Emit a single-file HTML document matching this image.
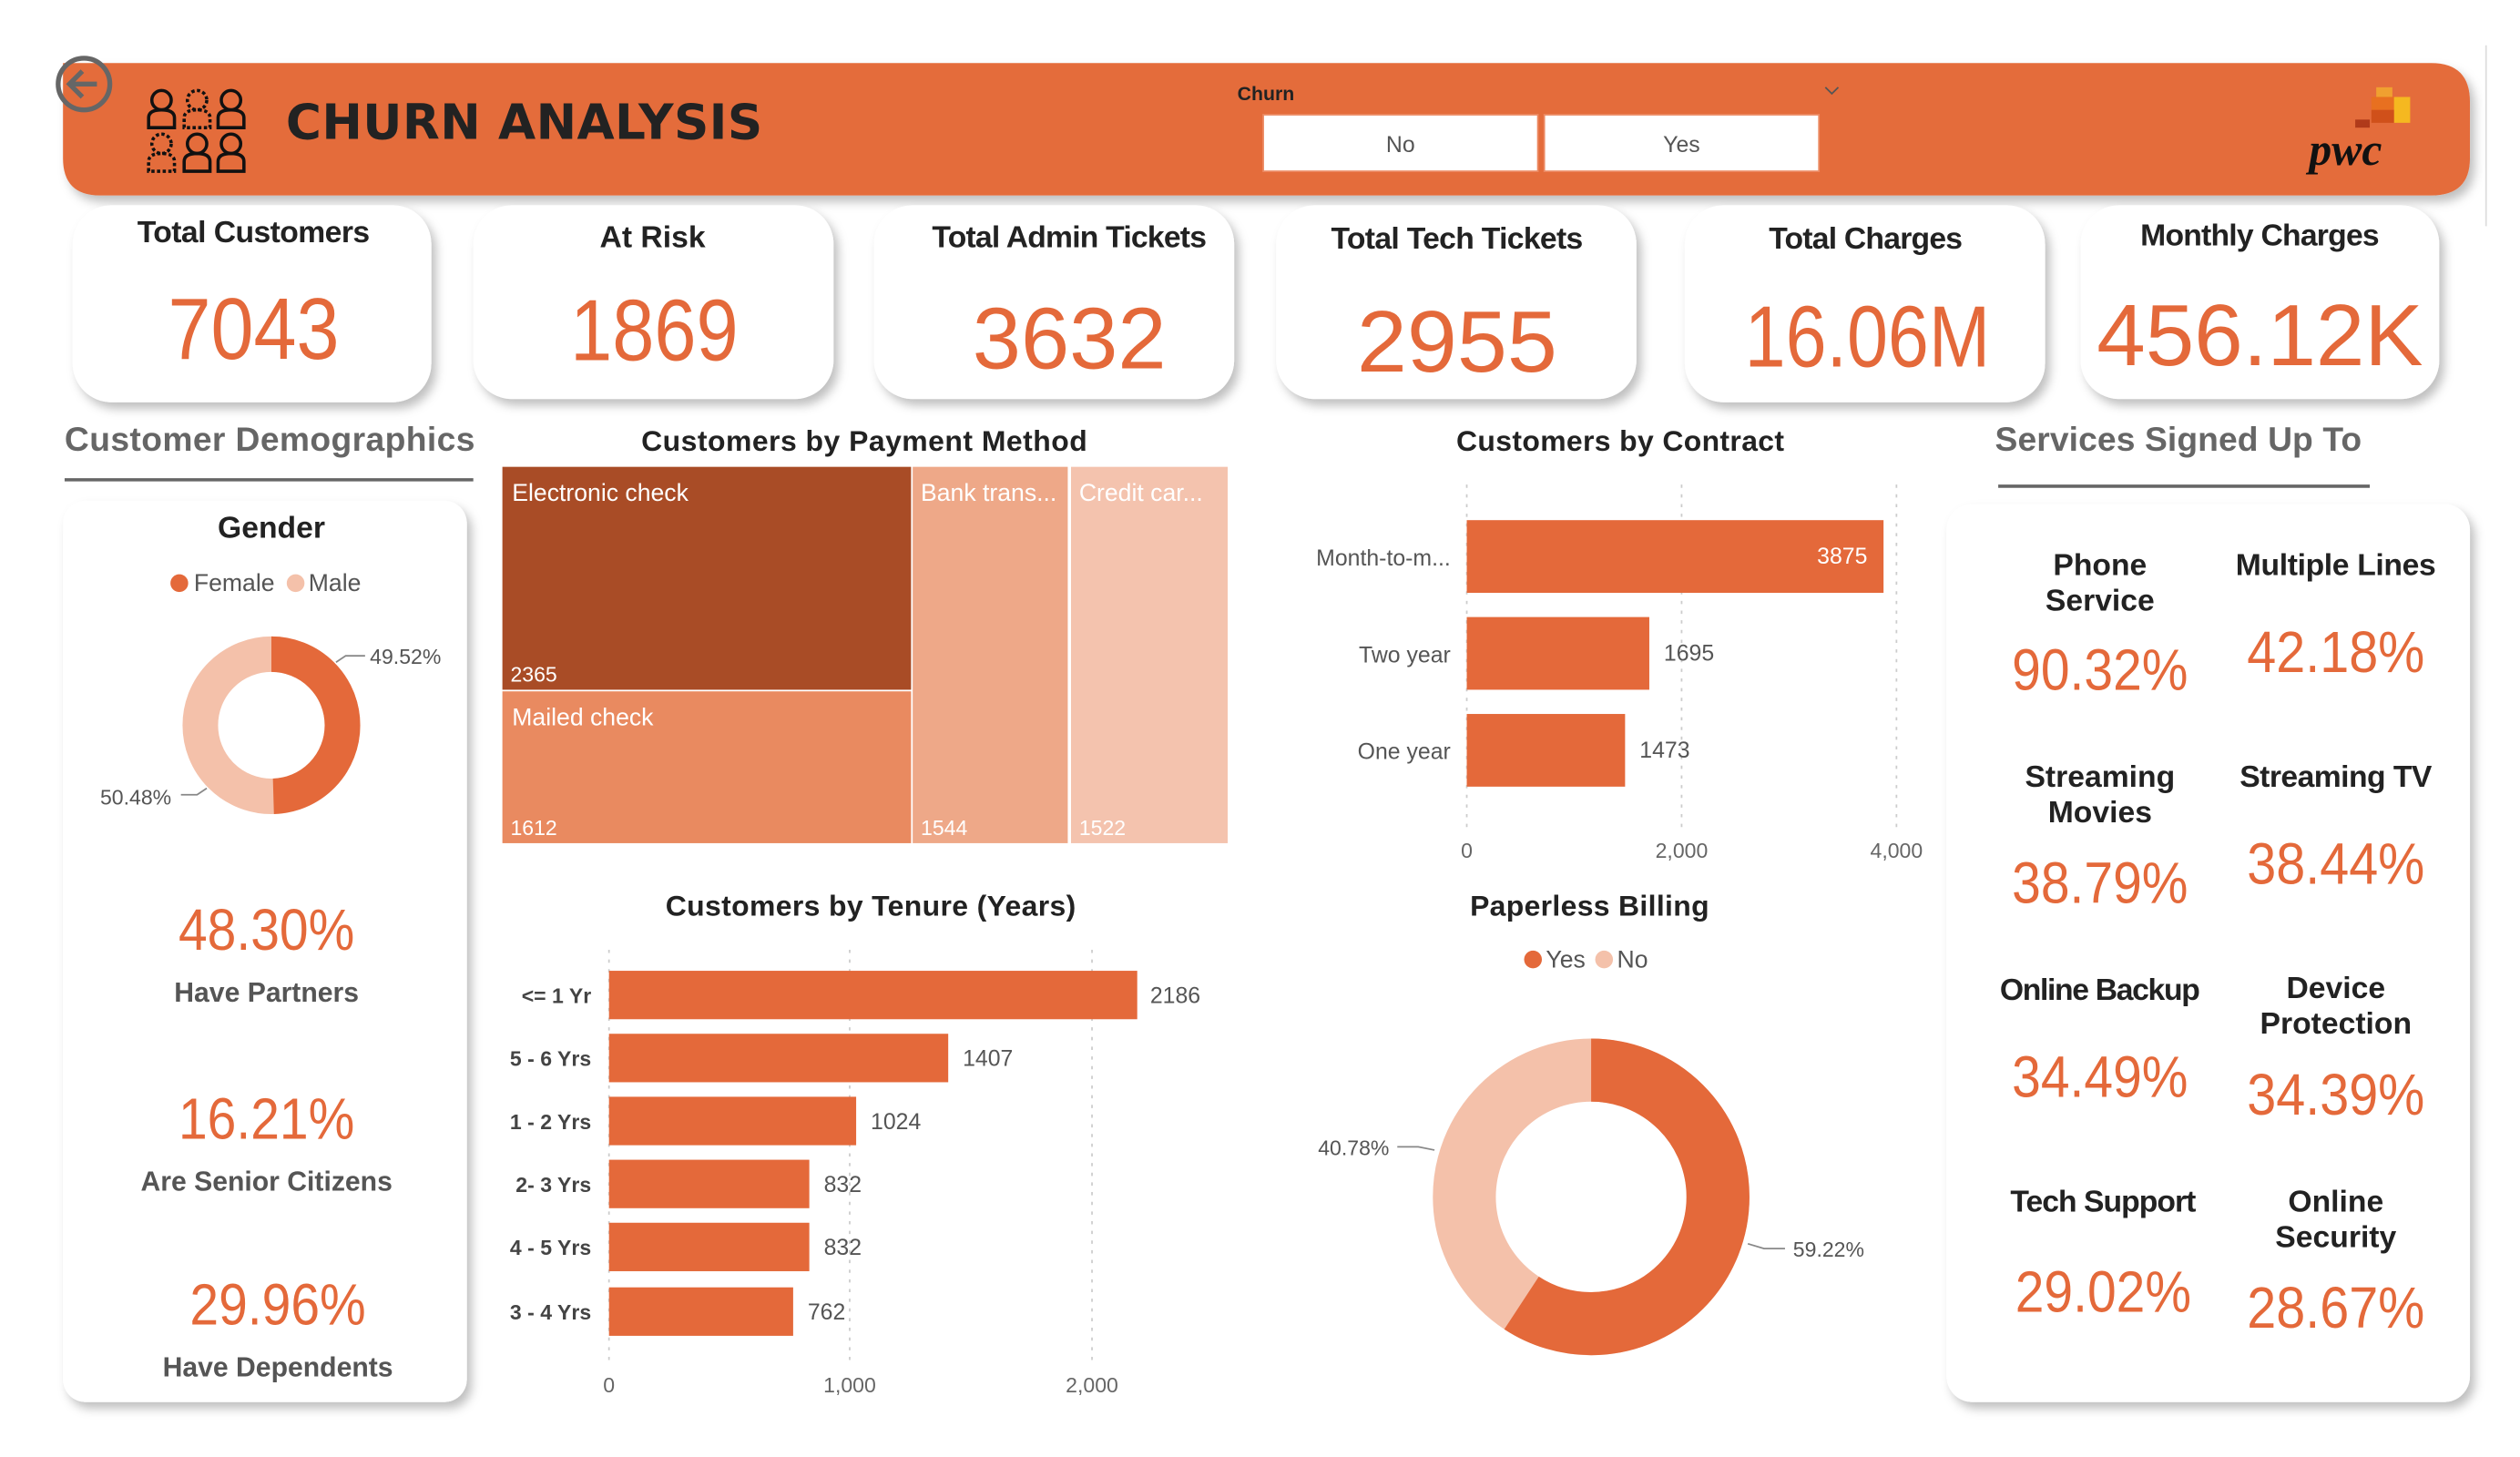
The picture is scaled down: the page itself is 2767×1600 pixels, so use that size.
<!DOCTYPE html>
<html><head><meta charset="utf-8">
<style>
html,body{margin:0;padding:0;background:#fff;overflow:hidden;}
svg{display:block;}
text{font-family:"Liberation Sans",sans-serif;}
.t{font-weight:bold;fill:#222;}
.k{fill:#E4693A;}
.ax{fill:#666;font-size:13px;}
</style></head>
<body>
<svg width="2767" height="1600" viewBox="0 0 1560 902" xmlns="http://www.w3.org/2000/svg">
<defs>
<filter id="sh" x="-10%" y="-10%" width="130%" height="130%"><feDropShadow dx="3" dy="4" stdDeviation="3" flood-color="#000" flood-opacity="0.25"/></filter>
</defs>
<rect width="1560" height="902" fill="#fff"/>
<line x1="1539" y1="28" x2="1539" y2="140" stroke="#ddd"/>
<path d="M39 39 H1505 Q1529 39 1529 63 V98 Q1529 121 1505 121 H62 Q39 121 39 98 Z" fill="#E46C3B" filter="url(#sh)"/>
<circle cx="52" cy="52" r="16" fill="none" stroke="#666" stroke-width="3"/>
<path d="M60 52 H44 M51 44 L43 52 L51 60" fill="none" stroke="#666" stroke-width="3"/>
<g fill="none" stroke="#111" stroke-width="2">
<circle cx="100" cy="62" r="6"/><path d="M92 79 v-6 q0-5 8-5 q8 0 8 5 v6 z"/>
<circle cx="122" cy="62" r="6" stroke-dasharray="2 1.5"/><path d="M114 79 v-6 q0-5 8-5 q8 0 8 5 v6 z" stroke-dasharray="2 1.5"/>
<circle cx="143" cy="62" r="6"/><path d="M135 79 v-6 q0-5 8-5 q8 0 8 5 v6 z"/>
<circle cx="100" cy="89" r="6" stroke-dasharray="2 1.5"/><path d="M92 106 v-6 q0-5 8-5 q8 0 8 5 v6 z" stroke-dasharray="2 1.5"/>
<circle cx="122" cy="89" r="6"/><path d="M114 106 v-6 q0-5 8-5 q8 0 8 5 v6 z"/>
<circle cx="143" cy="89" r="6"/><path d="M135 106 v-6 q0-5 8-5 q8 0 8 5 v6 z"/>
</g>
<text x="177" y="86" font-size="30" font-weight="bold" fill="#222" style="font-family:'DejaVu Sans','Liberation Sans',sans-serif" textLength="295">CHURN ANALYSIS</text>
<text x="766" y="62" font-size="12" font-weight="bold" fill="#222">Churn</text>
<path d="M1130 54 l4 4 l4 -4" fill="none" stroke="#555"/>
<rect x="782" y="71" width="170" height="35" fill="#fff" stroke="#EC8A63"/>
<rect x="956" y="71" width="170" height="35" fill="#fff" stroke="#EC8A63"/>
<text x="867" y="94" font-size="14" fill="#555" text-anchor="middle">No</text>
<text x="1041" y="94" font-size="14" fill="#555" text-anchor="middle">Yes</text>
<rect x="1471" y="54" width="10" height="6" fill="#F0A030"/>
<rect x="1468" y="60" width="14" height="8" fill="#E87020"/>
<rect x="1482" y="60" width="10" height="16" fill="#F5B820"/>
<rect x="1468" y="68" width="14" height="8" fill="#D0501A"/>
<rect x="1458" y="74" width="9" height="5" fill="#B03A1A"/>
<text x="1452" y="102" font-size="28" font-weight="bold" fill="#111" text-anchor="middle" style="font-family:'Liberation Serif',serif;font-style:italic">pwc</text>
<g filter="url(#sh)" fill="#fff">
<rect x="45" y="127" width="222" height="122" rx="24"/>
<rect x="293" y="127" width="223" height="120" rx="24"/>
<rect x="541" y="127" width="223" height="120" rx="24"/>
<rect x="790" y="127" width="223" height="120" rx="24"/>
<rect x="1043" y="127" width="223" height="122" rx="24"/>
<rect x="1288" y="127" width="222" height="120" rx="24"/>
</g>
<g class="t" font-size="19" text-anchor="middle">
<text x="157" y="150" textLength="144">Total Customers</text>
<text x="404" y="153">At Risk</text>
<text x="662" y="153" textLength="170">Total Admin Tickets</text>
<text x="902" y="154" textLength="156">Total Tech Tickets</text>
<text x="1155" y="154" textLength="120">Total Charges</text>
<text x="1399" y="152" textLength="148">Monthly Charges</text>
</g>
<g class="k" font-size="54" text-anchor="middle" lengthAdjust="spacingAndGlyphs">
<text x="157" y="222" textLength="106" lengthAdjust="spacingAndGlyphs">7043</text>
<text x="405" y="223" textLength="104" lengthAdjust="spacingAndGlyphs">1869</text>
<text x="662" y="228" textLength="120" lengthAdjust="spacingAndGlyphs">3632</text>
<text x="902" y="230" textLength="124" lengthAdjust="spacingAndGlyphs">2955</text>
<text x="1156" y="227" textLength="152" lengthAdjust="spacingAndGlyphs">16.06M</text>
<text x="1399" y="226" textLength="202" lengthAdjust="spacingAndGlyphs">456.12K</text>
</g>
<text x="40" y="279" font-size="21" font-weight="bold" fill="#666" textLength="254">Customer Demographics</text>
<line x1="40" y1="297" x2="293" y2="297" stroke="#666" stroke-width="2"/>
<text x="1235" y="279" font-size="21" font-weight="bold" fill="#666" textLength="227">Services Signed Up To</text>
<line x1="1237" y1="301" x2="1467" y2="301" stroke="#666" stroke-width="2"/>
<text x="535" y="279" font-size="18" class="t" text-anchor="middle" textLength="276">Customers by Payment Method</text>
<text x="1003" y="279" font-size="18" class="t" text-anchor="middle" textLength="203">Customers by Contract</text>
<text x="539" y="567" font-size="18" class="t" text-anchor="middle" textLength="254">Customers by Tenure (Years)</text>
<text x="984" y="567" font-size="18" class="t" text-anchor="middle" textLength="148">Paperless Billing</text>
<rect x="39" y="310" width="250" height="558" rx="14" fill="#fff" filter="url(#sh)"/>
<text x="168" y="333" font-size="19" class="t" text-anchor="middle">Gender</text>
<circle cx="111" cy="361" r="5.5" fill="#E4693A"/><text x="120" y="366" font-size="15" fill="#555">Female</text>
<circle cx="183" cy="361" r="5.5" fill="#F4C1AA"/><text x="191" y="366" font-size="15" fill="#555">Male</text>
<circle cx="168" cy="449" r="44" fill="none" stroke="#F4C1AA" stroke-width="22"/>
<circle cx="168" cy="449" r="44" fill="none" stroke="#E4693A" stroke-width="22" stroke-dasharray="136.9 300" transform="rotate(-90 168 449)"/>
<polyline points="208,410 214,406 226,406" fill="none" stroke="#888"/>
<text x="229" y="411" font-size="13" fill="#555">49.52%</text>
<polyline points="128,488 122,492 112,492" fill="none" stroke="#888"/>
<text x="62" y="498" font-size="13" fill="#555">50.48%</text>
<g class="k" font-size="36" text-anchor="middle">
<text x="165" y="588" textLength="109" lengthAdjust="spacingAndGlyphs">48.30%</text>
<text x="165" y="705" textLength="109" lengthAdjust="spacingAndGlyphs">16.21%</text>
<text x="172" y="820" textLength="109" lengthAdjust="spacingAndGlyphs">29.96%</text>
</g>
<g font-size="17" font-weight="bold" fill="#555" text-anchor="middle">
<text x="165" y="620">Have Partners</text>
<text x="165" y="737">Are Senior Citizens</text>
<text x="172" y="852">Have Dependents</text>
</g>
<rect x="311" y="289" width="253" height="138" fill="#A94C26"/>
<rect x="311" y="428" width="253" height="94" fill="#E98A60"/>
<rect x="565" y="289" width="96" height="233" fill="#EEA888"/>
<rect x="663" y="289" width="97" height="233" fill="#F4C3AE"/>
<g fill="#fff" font-size="15">
<text x="317" y="310">Electronic check</text>
<text x="316" y="422" font-size="13">2365</text>
<text x="317" y="449">Mailed check</text>
<text x="316" y="517" font-size="13">1612</text>
<text x="570" y="310">Bank trans...</text>
<text x="570" y="517" font-size="13">1544</text>
<text x="668" y="310">Credit car...</text>
<text x="668" y="517" font-size="13">1522</text>
</g>
<g stroke="#ccc" stroke-dasharray="2 4">
<line x1="908" y1="300" x2="908" y2="515"/><line x1="1041" y1="300" x2="1041" y2="515"/><line x1="1174" y1="300" x2="1174" y2="515"/>
</g>
<g fill="#E4693A">
<rect x="908" y="322" width="258" height="45"/>
<rect x="908" y="382" width="113" height="45"/>
<rect x="908" y="442" width="98" height="45"/>
</g>
<g font-size="14" fill="#555" text-anchor="end">
<text x="898" y="350">Month-to-m...</text>
<text x="898" y="410">Two year</text>
<text x="898" y="470">One year</text>
</g>
<text x="1156" y="349" font-size="14" fill="#fff" text-anchor="end">3875</text>
<text x="1030" y="409" font-size="14" fill="#555">1695</text>
<text x="1015" y="469" font-size="14" fill="#555">1473</text>
<g class="ax" text-anchor="middle"><text x="908" y="531">0</text><text x="1041" y="531">2,000</text><text x="1174" y="531">4,000</text></g>
<g stroke="#ccc" stroke-dasharray="2 4">
<line x1="377" y1="588" x2="377" y2="843"/><line x1="526" y1="588" x2="526" y2="843"/><line x1="676" y1="588" x2="676" y2="843"/>
</g>
<g fill="#E4693A">
<rect x="377" y="601" width="327" height="30"/>
<rect x="377" y="640" width="210" height="30"/>
<rect x="377" y="679" width="153" height="30"/>
<rect x="377" y="718" width="124" height="30"/>
<rect x="377" y="757" width="124" height="30"/>
<rect x="377" y="797" width="114" height="30"/>
</g>
<g font-size="13" font-weight="bold" fill="#444" text-anchor="end">
<text x="366" y="621">&lt;= 1 Yr</text><text x="366" y="660">5 - 6 Yrs</text><text x="366" y="699">1 - 2 Yrs</text>
<text x="366" y="738">2- 3 Yrs</text><text x="366" y="777">4 - 5 Yrs</text><text x="366" y="817">3 - 4 Yrs</text>
</g>
<g font-size="14" fill="#555">
<text x="712" y="621">2186</text><text x="596" y="660">1407</text><text x="539" y="699">1024</text>
<text x="510" y="738">832</text><text x="510" y="777">832</text><text x="500" y="817">762</text>
</g>
<g class="ax" text-anchor="middle"><text x="377" y="862">0</text><text x="526" y="862">1,000</text><text x="676" y="862">2,000</text></g>
<circle cx="949" cy="594" r="5.5" fill="#E4693A"/><text x="957" y="599" font-size="15" fill="#555">Yes</text>
<circle cx="993" cy="594" r="5.5" fill="#F4C1AA"/><text x="1001" y="599" font-size="15" fill="#555">No</text>
<circle cx="985" cy="741" r="78.5" fill="none" stroke="#F4C1AA" stroke-width="39"/>
<circle cx="985" cy="741" r="78.5" fill="none" stroke="#E4693A" stroke-width="39" stroke-dasharray="292.1 600" transform="rotate(-90 985 741)"/>
<polyline points="888,712 878,710 865,710" fill="none" stroke="#888"/>
<text x="860" y="715" font-size="13" fill="#555" text-anchor="end">40.78%</text>
<polyline points="1082,770 1092,773 1105,773" fill="none" stroke="#888"/>
<text x="1110" y="778" font-size="13" fill="#555">59.22%</text>
<rect x="1205" y="312" width="324" height="556" rx="16" fill="#fff" filter="url(#sh)"/>
<g class="t" font-size="19" text-anchor="middle">
<text x="1300" y="356">Phone</text><text x="1300" y="378">Service</text>
<text x="1446" y="356" textLength="124">Multiple Lines</text>
<text x="1300" y="487">Streaming</text><text x="1300" y="509">Movies</text>
<text x="1446" y="487" textLength="119">Streaming TV</text>
<text x="1300" y="619" textLength="124">Online Backup</text>
<text x="1446" y="618">Device</text><text x="1446" y="640">Protection</text>
<text x="1302" y="750" textLength="115">Tech Support</text>
<text x="1446" y="750">Online</text><text x="1446" y="772">Security</text>
</g>
<g class="k" font-size="36" text-anchor="middle">
<text x="1300" y="427" textLength="109" lengthAdjust="spacingAndGlyphs">90.32%</text><text x="1446" y="416" textLength="110" lengthAdjust="spacingAndGlyphs">42.18%</text>
<text x="1300" y="559" textLength="109" lengthAdjust="spacingAndGlyphs">38.79%</text><text x="1446" y="547" textLength="110" lengthAdjust="spacingAndGlyphs">38.44%</text>
<text x="1300" y="679" textLength="109" lengthAdjust="spacingAndGlyphs">34.49%</text><text x="1446" y="690" textLength="110" lengthAdjust="spacingAndGlyphs">34.39%</text>
<text x="1302" y="812" textLength="109" lengthAdjust="spacingAndGlyphs">29.02%</text><text x="1446" y="822" textLength="110" lengthAdjust="spacingAndGlyphs">28.67%</text>
</g>
</svg>
</body></html>
